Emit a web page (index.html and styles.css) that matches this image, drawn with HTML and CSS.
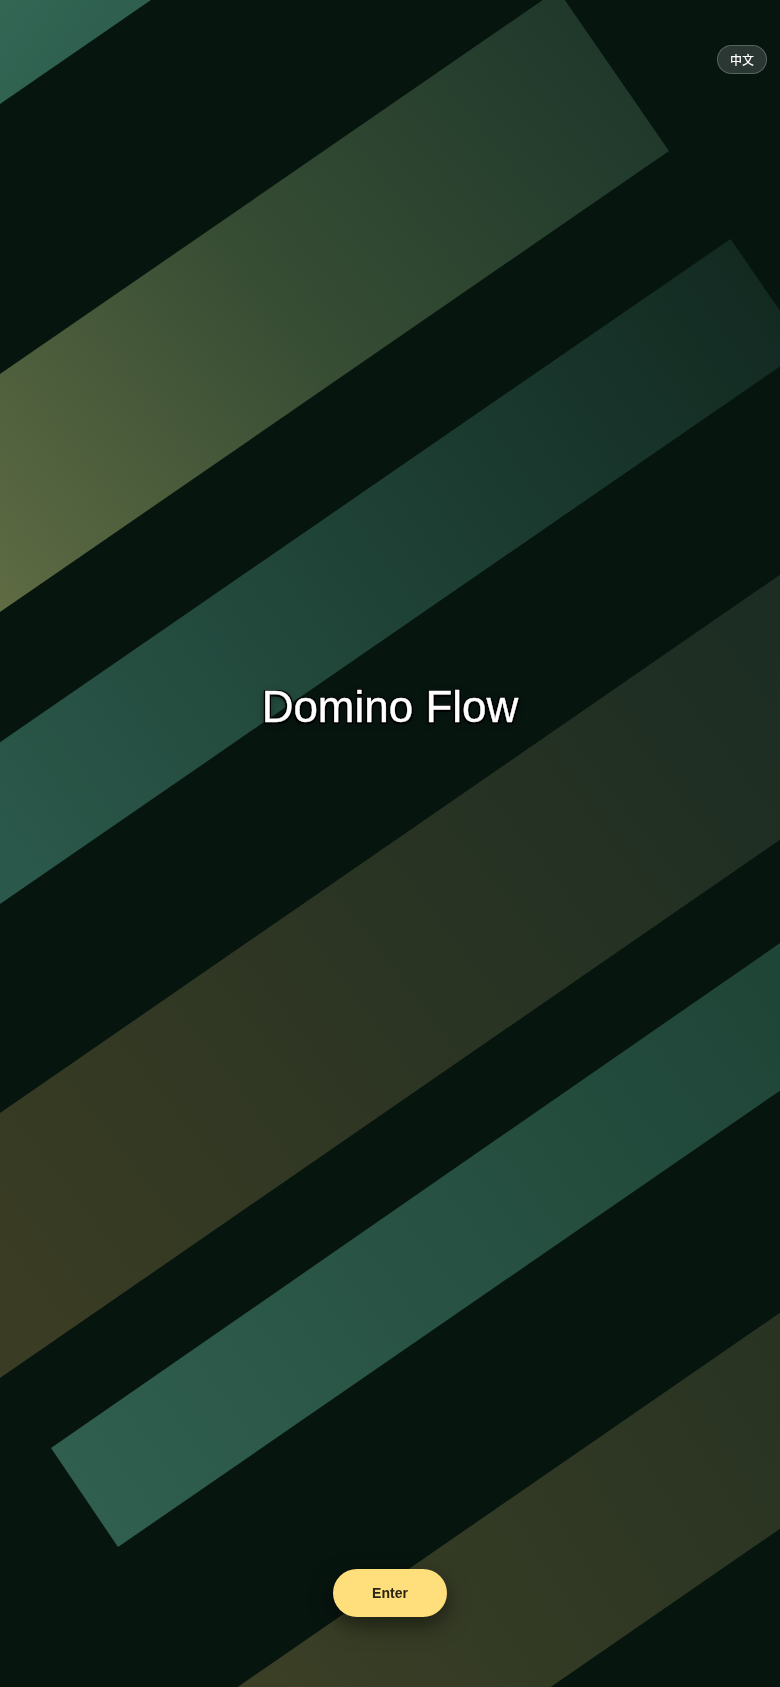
FILE: index.html
```html
<!DOCTYPE html>
<html lang="en">
<head>
<meta charset="utf-8">
<meta name="viewport" content="width=device-width, initial-scale=1">
<title>Domino Flow</title>
<link rel="stylesheet" href="styles.css">
</head>
<body>
<div class="backdrop" aria-hidden="true">
  <svg class="bands" viewBox="0 0 780 1687" preserveAspectRatio="none" xmlns="http://www.w3.org/2000/svg">
    <defs>
      <linearGradient id="gA" gradientUnits="userSpaceOnUse" x1="0" y1="0" x2="150" y2="100">
        <stop offset="0" stop-color="#336754"/>
        <stop offset="1" stop-color="#2c5a4b"/>
      </linearGradient>
      <linearGradient id="gB" gradientUnits="userSpaceOnUse" x1="0" y1="600" x2="640" y2="80">
        <stop offset="0" stop-color="#5e6b43"/>
        <stop offset="0.5" stop-color="#364c33"/>
        <stop offset="1" stop-color="#1f382b"/>
      </linearGradient>
      <linearGradient id="gC" gradientUnits="userSpaceOnUse" x1="0" y1="830" x2="770" y2="290">
        <stop offset="0" stop-color="#2a584a"/>
        <stop offset="1" stop-color="#132a21"/>
      </linearGradient>
      <linearGradient id="gD" gradientUnits="userSpaceOnUse" x1="0" y1="1260" x2="780" y2="660">
        <stop offset="0" stop-color="#3a3c23"/>
        <stop offset="1" stop-color="#1c2d23"/>
      </linearGradient>
      <linearGradient id="gE" gradientUnits="userSpaceOnUse" x1="80" y1="1500" x2="780" y2="1000">
        <stop offset="0" stop-color="#305f4f"/>
        <stop offset="1" stop-color="#1f4537"/>
      </linearGradient>
      <linearGradient id="gF" gradientUnits="userSpaceOnUse" x1="200" y1="1687" x2="780" y2="1330">
        <stop offset="0" stop-color="#3c4026"/>
        <stop offset="1" stop-color="#283322"/>
      </linearGradient>
    </defs>
    <polygon fill="url(#gA)" points="-100,173 296,-100 -100,-100"/>
    <polygon fill="url(#gB)" points="-100,443 557.7,-10.3 669,151 -100,681"/>
    <polygon fill="url(#gC)" points="-100,811 730.5,239 806,348.5 -100,973"/>
    <polygon fill="url(#gD)" points="-100,1182 900,492 900,757 -100,1447"/>
    <polygon fill="url(#gE)" points="51,1448 900,860 900,1008 118,1547"/>
    <polygon fill="url(#gF)" points="-100,1920 900,1230 900,1446 -100,2136"/>
  </svg>
</div>

<button class="lang-toggle" type="button">中文</button>

<main class="page">
  <h1 class="title">Domino Flow</h1>
  <button class="enter" type="button">Enter</button>
</main>
</body>
</html>
```

FILE: styles.css
```css
html, body {
  margin: 0;
  padding: 0;
}

body {
  background: #07150f;
  color: #ffffff;
  font-family: "Liberation Sans", Arial, sans-serif;
  min-height: 100vh;
  overflow: hidden;
}

.backdrop {
  position: fixed;
  inset: 0;
  z-index: 0;
}

.bands {
  display: block;
  width: 100%;
  height: 100%;
}

.lang-toggle {
  position: fixed;
  top: 45px;
  right: 13px;
  z-index: 2;
  height: 29px;
  padding: 0 12px;
  border: 1px solid rgba(255, 255, 255, 0.22);
  border-radius: 15px;
  background: rgba(255, 255, 255, 0.15);
  color: #ffffff;
  font-family: "Noto Sans CJK SC", "Noto Sans", sans-serif;
  font-size: 12px;
  font-weight: 500;
  line-height: 15px;
  cursor: pointer;
}

.page {
  position: relative;
  z-index: 1;
  box-sizing: border-box;
  min-height: 100vh;
  display: flex;
  flex-direction: column;
  align-items: center;
  padding: 682px 0 70px;
}

.title {
  margin: 0;
  font-family: "Liberation Sans", Arial, sans-serif;
  font-size: 44px;
  font-weight: 400;
  line-height: normal;
  color: #ffffff;
  -webkit-text-stroke: 0.4px #ffffff;
  text-shadow:
    -1.5px -1px 0 #000000,
    1.5px -1px 0 #000000,
    -1.5px 1.5px 0 #000000,
    1.5px 1.5px 0 #000000,
    0 2px 6px rgba(0, 0, 0, 0.55);
}

.enter {
  margin-top: auto;
  height: 48px;
  padding: 0 39px;
  border: none;
  border-radius: 24px;
  background: #ffdf7b;
  color: #2a2316;
  font-family: "Liberation Sans", Arial, sans-serif;
  font-size: 14px;
  font-weight: 700;
  cursor: pointer;
  box-shadow: 0 8px 22px rgba(0, 0, 0, 0.5);
}
```
